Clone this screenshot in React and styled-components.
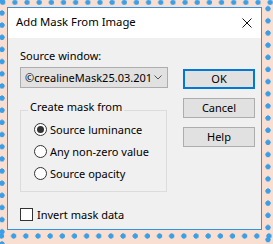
import React from "react";
import styled, { createGlobalStyle } from "styled-components";

const Global = createGlobalStyle`
  html, body { margin: 0; padding: 0; }
  body {
    width: 273px;
    height: 244px;
    overflow: hidden;
    font-family: "Noto Sans", "Open Sans", sans-serif;
    font-size: 11px;
    color: #000;
    background-color: #f9dfd2;
    background-image:
      radial-gradient(circle at 3px 3px, #3a9fe6 2.4px, transparent 2.9px),
      radial-gradient(circle at 3px 3px, #3a9fe6 2.4px, transparent 2.9px),
      radial-gradient(circle at 3px 3px, #3a9fe6 2.4px, transparent 2.9px),
      radial-gradient(circle at 3px 3px, #3a9fe6 2.4px, transparent 2.9px);
    background-size: 12.17px 6px, 6px 12.17px, 12.17px 6px, 6px 12.17px;
    background-repeat: repeat-x, repeat-y, repeat-x, repeat-y;
    background-position: -0.3px -0.6px, -1px 10px, -1.5px 233px, 264.5px 5.7px;
  }
`;

const Window = styled.div`
  margin: 7px 0 0 7px;
  width: 255px;
  height: 223px;
  box-sizing: border-box;
  border: 1px solid #2f93e3;
  background: #f0f0f0;
  display: flex;
  flex-direction: column;
`;

const TitleBar = styled.div`
  height: 30px;
  background: #ffffff;
  display: flex;
  align-items: center;
  justify-content: space-between;
  padding: 0 0 0 8px;
`;

const Title = styled.span`
  font-size: 11.3px;
  line-height: 14px;
  margin-top: -2px;
`;

const Close = styled.svg`
  width: 10px;
  height: 10px;
  margin-right: 9px;
  margin-top: -1px;
`;

const Body = styled.div`
  flex: 1;
  display: flex;
  padding: 10px 0 0 12px;
`;

const LeftCol = styled.div`
  width: 148px;
  display: flex;
  flex-direction: column;
`;

const RightCol = styled.div`
  width: 72px;
  margin-left: 15px;
  padding-top: 21px;
  display: flex;
  flex-direction: column;
  gap: 9px;
`;

const Label = styled.div`
  line-height: 15px;
`;

const Select = styled.div`
  margin-top: 4px;
  height: 21px;
  box-sizing: border-box;
  border: 1px solid #adadad;
  background: #e1e1e1;
  display: flex;
  align-items: center;
  padding: 0 0 0 4px;
  line-height: 14px;
  white-space: nowrap;
`;

const SelectText = styled.span`
  flex: 1;
  overflow: hidden;
`;

const Chevron = styled.svg`
  width: 8px;
  height: 5px;
  margin: 0 5px 0 3px;
`;

const Group = styled.div`
  margin-top: 22px;
  width: 147px;
  height: 82px;
  box-sizing: border-box;
  border: 1px solid #dcdcdc;
  padding: 0 0 0 13px;
  display: flex;
  flex-direction: column;
`;

const Legend = styled.div`
  margin: -11px 0 4px -6px;
  padding: 0 2px;
  width: fit-content;
  background: #f0f0f0;
  line-height: 14px;
`;

const Option = styled.div`
  height: 22px;
  display: flex;
  align-items: center;
  gap: 3px;
`;

const Radio = styled.span`
  width: 13px;
  height: 13px;
  box-sizing: border-box;
  border-radius: 50%;
  border: 1px solid #333;
  background: #fff;
  display: flex;
  align-items: center;
  justify-content: center;
  &::after {
    content: "";
    width: 7px;
    height: 7px;
    border-radius: 50%;
    background: ${(p) => (p.$checked ? "#333" : "transparent")};
  }
`;

const CheckRow = styled.div`
  margin-top: 11px;
  height: 22px;
  display: flex;
  align-items: center;
  gap: 4px;
`;

const Checkbox = styled.span`
  width: 13px;
  height: 13px;
  box-sizing: border-box;
  border: 1px solid #333;
  background: #fff;
`;

const Button = styled.div`
  height: 20px;
  box-sizing: border-box;
  border: ${(p) => (p.$default ? "2px solid #0078d7" : "1px solid #adadad")};
  background: #e1e1e1;
  display: flex;
  align-items: center;
  justify-content: center;
  line-height: 14px;
`;

export default function App() {
  return (
    <>
      <Global />
      <Window>
        <TitleBar>
          <Title>Add Mask From Image</Title>
          <Close viewBox="0 0 10 10">
            <path d="M0.5 0.5 L9.5 9.5 M9.5 0.5 L0.5 9.5" stroke="#111" strokeWidth="1" fill="none" />
          </Close>
        </TitleBar>
        <Body>
          <LeftCol>
            <Label>Source window:</Label>
            <Select>
              <SelectText>©crealineMask25.03.201</SelectText>
              <Chevron viewBox="0 0 8 5">
                <path d="M0.5 0.5 L4 4 L7.5 0.5" stroke="#555" strokeWidth="1" fill="none" />
              </Chevron>
            </Select>
            <Group>
              <Legend>Create mask from</Legend>
              <Option><Radio $checked />Source luminance</Option>
              <Option><Radio />Any non-zero value</Option>
              <Option><Radio />Source opacity</Option>
            </Group>
            <CheckRow><Checkbox />Invert mask data</CheckRow>
          </LeftCol>
          <RightCol>
            <Button $default>OK</Button>
            <Button>Cancel</Button>
            <Button>Help</Button>
          </RightCol>
        </Body>
      </Window>
    </>
  );
}
